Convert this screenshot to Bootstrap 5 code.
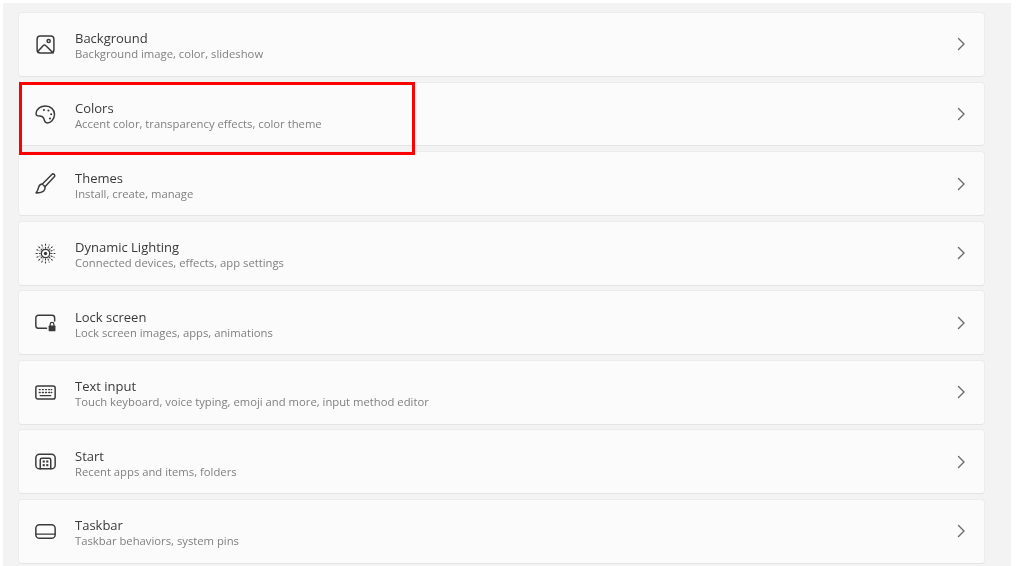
<!DOCTYPE html>
<html lang="en">
<head>
<meta charset="utf-8">
<title>Personalization</title>
<link href="https://cdn.jsdelivr.net/npm/bootstrap@5.3.0/dist/css/bootstrap.min.css" rel="stylesheet">
<style>
html,body{height:100%;overflow:hidden;background:#fff;}
body{font-family:"Open Sans","Noto Sans","Liberation Sans",sans-serif;}
.panel-bg{background:#f3f3f3;margin:3px 13px 0 3px;height:563px;padding:9px 26.5px 0 15px;gap:4.7px;overflow:hidden;}
.set-row{flex:0 0 64.9px;background:#fbfbfb;border:1px solid #ececec;border-bottom-color:#e4e4e4;border-radius:4px;padding:0 18px 0 16px;}
.set-icon{width:21px;height:21px;margin-right:19.5px;margin-left:-.5px;flex:none;color:#3a3a3a;filter:blur(.35px);}
.set-text{padding-top:1px;filter:blur(.3px);}
.set-title{font-size:13px;line-height:18px;color:#3a3a3a;margin-top:1px;}
.set-sub{font-size:11.28px;line-height:15px;color:#808080;margin-top:-1px;}
.set-chev{width:10px;height:14px;color:#6a6a6a;flex:none;}
.mark-box{position:absolute;left:19px;top:82px;width:396px;height:73px;border:3px solid #f00;pointer-events:none;}
.set-row svg{fill:none;stroke:currentColor;stroke-width:1.4;stroke-linecap:round;stroke-linejoin:round;}
</style>
</head>
<body>
<div class="panel-bg d-flex flex-column">

<div class="set-row d-flex align-items-center">
<svg class="set-icon" viewBox="0 0 20 20"><rect x="2" y="2" width="16" height="16" rx="3"/><path d="M2.500 17l5.400-6a1.500 1.500 0 0 1 2.200 0l7.200 7"/><circle cx="13" cy="6.700" r="1.500"/></svg>
<div class="flex-grow-1 set-text"><div class="set-title">Background</div><div class="set-sub">Background image, color, slideshow</div></div>
<svg class="set-chev" viewBox="0 0 10 14"><path d="M2.500 1.500l5.500 5.500-5.500 5.500"/></svg>
</div>

<div class="set-row d-flex align-items-center">
<svg class="set-icon" viewBox="0 0 20 20"><path d="M1 8.800C1.500 4.700 5.400 1.800 10 1.800c4.800 0 8.600 3.600 8.600 8 0 4.700-3.500 8.200-7 8.200-2.700 0-2.500-2.300-3.200-4.100-.7-1.700-2.300-2.500-3.900-2.500-1.700 0-3.700 0-3.500-2.600z"/><g fill="currentColor" stroke="none"><circle cx="8.500" cy="5.700" r="1"/><circle cx="12.800" cy="6.200" r="1"/><circle cx="15.400" cy="9.800" r="1"/><circle cx="14.300" cy="13.800" r="1"/></g></svg>
<div class="flex-grow-1 set-text"><div class="set-title">Colors</div><div class="set-sub">Accent color, transparency effects, color theme</div></div>
<svg class="set-chev" viewBox="0 0 10 14"><path d="M2.500 1.500l5.500 5.500-5.500 5.500"/></svg>
</div>

<div class="set-row d-flex align-items-center">
<svg class="set-icon" viewBox="0 0 20 20"><path d="M16.800 .8c1.300 0 2.200 1 2 2.200L9.500 13 7 10.500z"/><path d="M7 10.500c-2 0-3 1-3.500 3-.3 1.500-1 3.500-2.500 5.500 3 0 6-.5 7.500-2 1.200-1.200 1.300-2.200 1-3.500"/></svg>
<div class="flex-grow-1 set-text"><div class="set-title">Themes</div><div class="set-sub">Install, create, manage</div></div>
<svg class="set-chev" viewBox="0 0 10 14"><path d="M2.500 1.500l5.500 5.500-5.500 5.500"/></svg>
</div>

<div class="set-row d-flex align-items-center">
<svg class="set-icon" viewBox="0 0 20 20"><circle cx="10" cy="10" r="4" stroke-width="1.200"/><circle cx="10" cy="10" r="1.600" fill="currentColor" stroke="none"/><path stroke-dasharray="1.200 1.900" d="M10 1v4M10 15v4M1 10h4M15 10h4M3.600 3.600l2.900 2.900M13.500 13.500l2.900 2.900M3.600 16.400l2.900-2.900M13.500 6.500l2.900-2.900M6.500 1.800l1.100 3M12.400 15.200l1.100 3M1.800 6.500l3 1.100M15.200 12.400l3 1.100M1.800 13.500l3-1.100M15.200 7.600l3-1.100M6.500 18.200l1.100-3M12.400 4.800l1.100-3" stroke-width="1"/></svg>
<div class="flex-grow-1 set-text"><div class="set-title">Dynamic Lighting</div><div class="set-sub">Connected devices, effects, app settings</div></div>
<svg class="set-chev" viewBox="0 0 10 14"><path d="M2.500 1.500l5.500 5.500-5.500 5.500"/></svg>
</div>

<div class="set-row d-flex align-items-center">
<svg class="set-icon" viewBox="0 0 20 20"><path d="M11 15.500H3A2.500 2.500 0 0 1 .8 13V5.500A2.500 2.500 0 0 1 3.300 3h12.900a2.500 2.500 0 0 1 2.500 2.500V8.500"/><rect x="13" y="12.800" width="6.500" height="5.500" rx=".8" fill="currentColor" stroke="none"/><path d="M14.500 13v-1.300a1.700 1.700 0 0 1 3.500 0V13" stroke-width="1.200"/></svg>
<div class="flex-grow-1 set-text"><div class="set-title">Lock screen</div><div class="set-sub">Lock screen images, apps, animations</div></div>
<svg class="set-chev" viewBox="0 0 10 14"><path d="M2.500 1.500l5.500 5.500-5.500 5.500"/></svg>
</div>

<div class="set-row d-flex align-items-center">
<svg class="set-icon" viewBox="0 0 20 20"><rect x=".8" y="3.800" width="18.400" height="12.400" rx="2"/><path stroke-width="1.200" d="M4 7.200h1M7 7.200h1M10 7.200h1M13 7.200h1M15.500 7.200h.5M4 10h1M7 10h1M10 10h1M13 10h1M15.500 10h.5M5 13h10"/></svg>
<div class="flex-grow-1 set-text"><div class="set-title">Text input</div><div class="set-sub">Touch keyboard, voice typing, emoji and more, input method editor</div></div>
<svg class="set-chev" viewBox="0 0 10 14"><path d="M2.500 1.500l5.500 5.500-5.500 5.500"/></svg>
</div>

<div class="set-row d-flex align-items-center">
<svg class="set-icon" viewBox="0 0 20 20"><rect x=".8" y="3" width="18.400" height="14" rx="3.500"/><path d="M5 17V8.500a1.500 1.500 0 0 1 1.500-1.500h7A1.500 1.500 0 0 1 15 8.500V17"/><g fill="currentColor" stroke="none"><rect x="7.300" y="9" width="2" height="2"/><rect x="10.700" y="9" width="2" height="2"/><rect x="7.300" y="12.500" width="2" height="2"/><rect x="10.700" y="12.500" width="2" height="2"/></g></svg>
<div class="flex-grow-1 set-text"><div class="set-title">Start</div><div class="set-sub">Recent apps and items, folders</div></div>
<svg class="set-chev" viewBox="0 0 10 14"><path d="M2.500 1.500l5.500 5.500-5.500 5.500"/></svg>
</div>

<div class="set-row d-flex align-items-center">
<svg class="set-icon" viewBox="0 0 20 20"><rect x=".8" y="3.500" width="18.400" height="13" rx="3.500"/><path d="M1 12.500h18"/></svg>
<div class="flex-grow-1 set-text"><div class="set-title">Taskbar</div><div class="set-sub">Taskbar behaviors, system pins</div></div>
<svg class="set-chev" viewBox="0 0 10 14"><path d="M2.500 1.500l5.500 5.500-5.500 5.500"/></svg>
</div>

</div>
<div class="mark-box"></div>
</body>
</html>
